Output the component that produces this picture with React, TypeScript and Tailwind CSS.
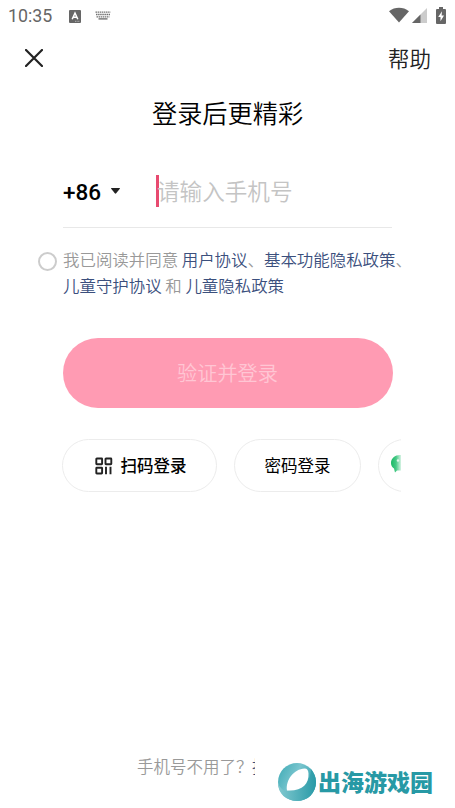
function StatusBar() {
  return (
    <div className="flex h-8 items-center pl-2 pr-[9px] text-[#666]">
      <span className="w-[61px] font-[Roboto] text-[17.8px] font-normal leading-8">10:35</span>
      <svg className="h-[13px] w-3" viewBox="0 0 12 13">
        <rect width="12" height="13" rx="1" fill="#666" />
        <path d="M3.2 9.3 6 3l2.8 6.3M4.3 7.2h3.4" fill="none" stroke="#fff" strokeWidth="1.5" />
        <path d="M6 11.3h5" stroke="#ccc" strokeWidth=".8" strokeDasharray="1 .6" />
      </svg>
      <svg className="ml-[14px] mb-px h-[9px] w-4" viewBox="0 0 16 9">
        <path d="M.5 1.2h15M1 3.5h14M1.5 5.8h13" stroke="#707070" strokeWidth="1.3" strokeDasharray="1.5 .6" />
        <path d="M3.5 7.9h9" stroke="#666" strokeWidth="1.3" />
      </svg>
      <div className="-mt-[2px] ml-auto flex items-center">
        <svg className="h-4 w-5" viewBox="0 0 20 16">
          <path d="M0 4.2C5.8-.4 14.2-.4 20 4.2L10 15.5z" fill="#666" />
        </svg>
        <svg className="ml-[3px] h-[15px] w-[15px]" viewBox="0 0 15 15">
          <path d="M0 15 15 0v15z" fill="#ccc" />
          <path d="M0 15 8.5 6.5V15z" fill="#666" />
        </svg>
        <svg className="ml-[9px] h-[17px] w-[10px]" viewBox="0 0 10 17">
          <path d="M3 0h4v2h2a1 1 0 0 1 1 1v13a1 1 0 0 1-1 1H1a1 1 0 0 1-1-1V3a1 1 0 0 1 1-1h2z" fill="#666" />
          <path d="M6 4.2 2.2 10h2.3v4.2L8 8.5H5.6z" fill="#fff" />
        </svg>
      </div>
    </div>
  );
}

function QrIcon() {
  return (
    <svg className="h-[18px] w-[18px]" viewBox="0 0 18 18" fill="none" stroke="#222" strokeWidth="1.9">
      <rect x="1.3" y="1.5" width="5.8" height="5.8" rx=".5" />
      <rect x="10.5" y="1.5" width="5.8" height="5.8" rx=".5" />
      <rect x="1.3" y="10.7" width="5.8" height="5.8" rx=".5" />
      <path d="M11 9.8v7.4M15.5 9.8v7.4" />
    </svg>
  );
}

function Watermark() {
  return (
    <div className="absolute left-[277px] top-[762px] flex items-center">
      <svg className="h-10 w-10" viewBox="0 0 40 40">
        <defs>
          <linearGradient id="ring" x1="0" x2="1" y1="0" y2=".5">
            <stop offset="0" stopColor="#3ba9b4" />
            <stop offset=".5" stopColor="#79c5ce" />
            <stop offset="1" stopColor="#2b9eab" />
          </linearGradient>
          <linearGradient id="ringBase" x1="0" x2="1">
            <stop offset="0" stopColor="#82c9d0" />
            <stop offset="1" stopColor="#299aa7" />
          </linearGradient>
        </defs>
        <circle cx="20" cy="20" r="19" fill="url(#ring)" />
        <path d="M1.2 22C1 31 9 39 20 39s19-8 19-19c0-5-2-9-5-13 0 12-8 21-25 22-4-1-6-4-7.8-7z" fill="url(#ringBase)" />
        <path d="M10 28.5C8.500 18 17 7 27.500 6.500c2.500-.1 3.800 1.500 4 5C32.200 22 25 29.500 10 28.500z" fill="#fff" />
      </svg>
      <span className="-mt-[2px] ml-px text-[23px] font-black leading-10 text-[#2799a5]">出海游戏园</span>
    </div>
  );
}

export default function App() {
  return (
    <div className="relative flex h-[808px] w-[455px] flex-col overflow-hidden bg-white font-['Noto_Sans_CJK_SC',sans-serif] font-[350] text-black">
      <StatusBar />

      <header className="flex h-[52px] items-center justify-between pl-[25px] pr-6">
        <svg className="h-[18px] w-[18px]" viewBox="0 0 18 18">
          <path d="M1 1l16 16M17 1 1 17" stroke="#222" strokeWidth="2.2" strokeLinecap="round" />
        </svg>
        <button className="text-[21.5px] leading-8 text-[#222]">帮助</button>
      </header>

      <h1 className="mt-[8px] text-center text-[25.2px] font-[350] leading-10">登录后更精彩</h1>

      <div className="mx-[63px] mt-[23px] flex h-[73px] items-center border-b border-[#e8e8e8]">
        <span className="mt-[3px] w-[48px] font-[Roboto] text-[22.5px] font-medium">+86</span>
        <svg className="h-[6px] w-[9px]" viewBox="0 0 9 6">
          <path d="M.5 0h8q.8 0 .3.7L5.2 5.3q-.7.8-1.4 0L.2.7Q-.3 0 .5 0z" fill="#222" />
        </svg>
        <div className="ml-9 h-8 w-[3px] bg-[#e84a70]" />
        <span className="-ml-[2px] text-[22.6px] text-[#c4c4c4]">请输入手机号</span>
      </div>

      <div className="ml-[38px] mt-[18px] flex">
        <span className="mt-[6px] h-[19px] w-[19px] shrink-0 rounded-full border-2 border-[#ccc]" />
        <p className="ml-[6px] whitespace-nowrap text-[16.45px] leading-[26px] text-[#999]">
          我已阅读并同意 <a className="text-[#3b4f7d]">用户协议</a>、<a className="text-[#3b4f7d]">基本功能隐私政策</a>、
          <br />
          <a className="text-[#3b4f7d]">儿童守护协议</a> 和 <a className="text-[#3b4f7d]">儿童隐私政策</a>
        </p>
      </div>

      <button className="mx-[62.5px] mt-[40px] h-[70px] shrink-0 rounded-full bg-[#ff9bb3] text-[20.2px] text-[#ffc6d4]">
        验证并登录
      </button>

      <div className="ml-[62px] mt-[31px] flex w-[340px] shrink-0 gap-[17px] overflow-hidden">
        <button className="flex h-[53px] w-[155px] shrink-0 items-center justify-center gap-2 rounded-full border border-[#ececec] pl-[2px] text-[16.5px] font-medium">
          <QrIcon />
          扫码登录
        </button>
        <button className="h-[53px] w-[127px] shrink-0 rounded-full border border-[#ececec] text-[16.5px] font-normal">密码登录</button>
        <div className="w-[23px] overflow-hidden">
          <div className="flex h-[53px] w-[127px] items-center rounded-full border border-[#ececec] pb-1 pl-3">
            <svg className="h-[18px] w-[18px]" viewBox="0 0 18 18">
              <defs>
                <linearGradient id="chat" x1="0" x2="10" gradientUnits="userSpaceOnUse">
                  <stop offset="0" stopColor="#19b965" />
                  <stop offset=".5" stopColor="#45c985" />
                  <stop offset="1" stopColor="#d7f3e4" />
                </linearGradient>
              </defs>
              <path d="M9 0C4 0 0 3.3 0 8c0 2.5 1.2 4.6 3 5.5L4 17.5l2-2H10V0z" fill="url(#chat)" />
              <circle cx="7" cy="5.5" r="1.2" fill="#e0f8eb" />
            </svg>
          </div>
        </div>
      </div>

      <footer className="mb-[29px] ml-[137px] mt-auto flex text-[16.5px] leading-[26px] text-[#999]">
        <span className="w-[115px] whitespace-nowrap">手机号不用了？</span>
        <a className="w-[3px] overflow-hidden whitespace-nowrap text-[#3b4f7d]">找</a>
      </footer>

      <Watermark />
    </div>
  );
}
